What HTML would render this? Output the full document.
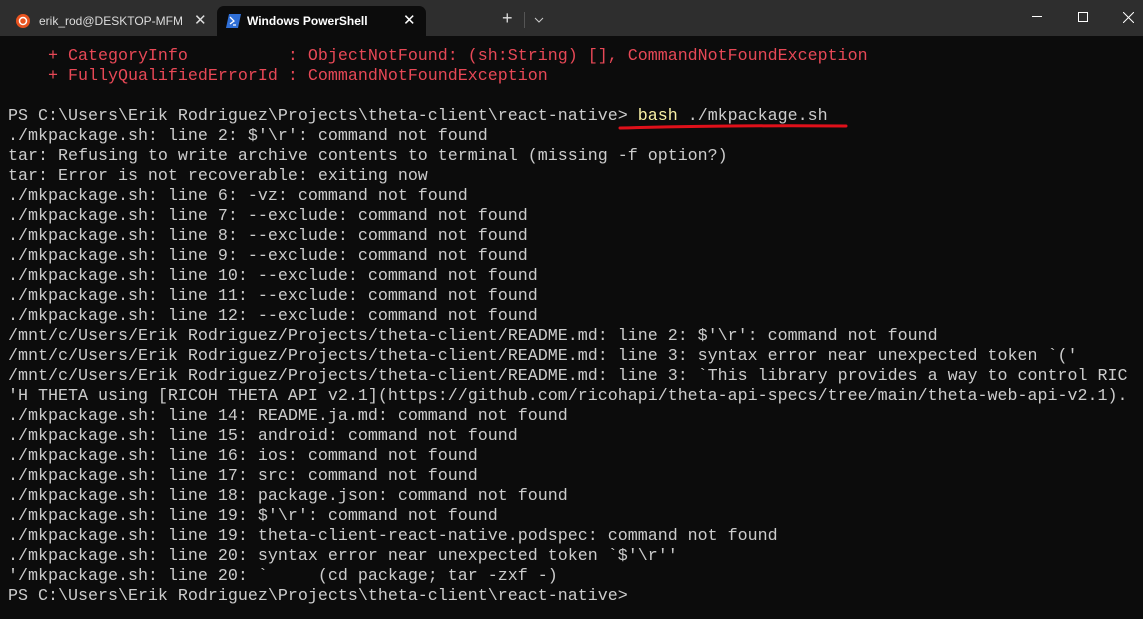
<!DOCTYPE html>
<html><head><meta charset="utf-8"><style>
html,body{margin:0;padding:0;width:1143px;height:619px;overflow:hidden;background:#0c0c0c;font-family:"Liberation Sans",sans-serif}
#bar{position:absolute;left:0;top:0;width:1143px;height:36px;background:#2e2e2e}
.tab{position:absolute;top:6px;height:30px;font-size:12px;color:#ccc;line-height:30px}
#t2{left:217px;width:209px;background:#0c0c0c;border-radius:7px 7px 0 0;color:#fff}
pre{position:absolute;left:8px;top:47px;margin:0;font-family:"Liberation Mono",monospace;font-size:16.67px;line-height:20px;color:#cccccc;white-space:pre}
.r{color:#e74856}.y{color:#f9f1a5}
</style></head><body>
<div id="bar">
 <div class="tab" style="left:0;width:215px">
  <svg style="position:absolute;left:16px;top:8px" width="14" height="14"><circle cx="7" cy="7" r="7" fill="#e95420"/><circle cx="7" cy="7" r="3.5" fill="none" stroke="#fff" stroke-width="1.5"/></svg>
  <span style="position:absolute;left:39px;width:143px;overflow:hidden;white-space:nowrap;color:#ddd">erik_rod@DESKTOP-MFMN3H:</span>
  <span style="position:absolute;left:194px;font-size:15px;color:#ddd">✕</span>
 </div>
 <div class="tab" id="t2">
  <svg style="position:absolute;left:9px;top:8px" width="15" height="14"><path d="M3 0H15L12 14H0Z" fill="#2f6fd6"/><path d="M4 3L8 7L4 10M7 11H10" stroke="#fff" stroke-width="1.3" fill="none"/></svg>
  <span style="position:absolute;left:30px;font-weight:bold">Windows PowerShell</span>
  <span style="position:absolute;left:186px;font-size:15px">✕</span>
 </div>
 <span style="position:absolute;left:502px;top:8px;color:#ddd;font-size:18px">+</span>
 <div style="position:absolute;left:524px;top:12px;width:1px;height:16px;background:#555"></div>
 <svg style="position:absolute;left:534px;top:17px" width="10" height="6"><path d="M1 1L5 5L9 1" stroke="#ccc" fill="none"/></svg>
 <div style="position:absolute;left:1032px;top:16px;width:10px;height:1px;background:#fff"></div>
 <div style="position:absolute;left:1078px;top:12px;width:8px;height:8px;border:1px solid #fff"></div>
 <svg style="position:absolute;left:1123px;top:12px" width="11" height="11"><path d="M0 0L11 11M11 0L0 11" stroke="#fff"/></svg>
</div>
<pre><span class="r">    + CategoryInfo          : ObjectNotFound: (sh:String) [], CommandNotFoundException
    + FullyQualifiedErrorId : CommandNotFoundException</span>

PS C:\Users\Erik Rodriguez\Projects\theta-client\react-native> <span class="y">bash</span> ./mkpackage.sh
./mkpackage.sh: line 2: $'\r': command not found
tar: Refusing to write archive contents to terminal (missing -f option?)
tar: Error is not recoverable: exiting now
./mkpackage.sh: line 6: -vz: command not found
./mkpackage.sh: line 7: --exclude: command not found
./mkpackage.sh: line 8: --exclude: command not found
./mkpackage.sh: line 9: --exclude: command not found
./mkpackage.sh: line 10: --exclude: command not found
./mkpackage.sh: line 11: --exclude: command not found
./mkpackage.sh: line 12: --exclude: command not found
/mnt/c/Users/Erik Rodriguez/Projects/theta-client/README.md: line 2: $'\r': command not found
/mnt/c/Users/Erik Rodriguez/Projects/theta-client/README.md: line 3: syntax error near unexpected token `('
/mnt/c/Users/Erik Rodriguez/Projects/theta-client/README.md: line 3: `This library provides a way to control RIC
'H THETA using [RICOH THETA API v2.1](https://github.com/ricohapi/theta-api-specs/tree/main/theta-web-api-v2.1).
./mkpackage.sh: line 14: README.ja.md: command not found
./mkpackage.sh: line 15: android: command not found
./mkpackage.sh: line 16: ios: command not found
./mkpackage.sh: line 17: src: command not found
./mkpackage.sh: line 18: package.json: command not found
./mkpackage.sh: line 19: $'\r': command not found
./mkpackage.sh: line 19: theta-client-react-native.podspec: command not found
./mkpackage.sh: line 20: syntax error near unexpected token `$'\r''
'/mkpackage.sh: line 20: `     (cd package; tar -zxf -)
PS C:\Users\Erik Rodriguez\Projects\theta-client\react-native></pre>
<svg style="position:absolute;left:615px;top:122px" width="236" height="10"><path d="M5 6Q120 3 231 4" stroke="#e0101a" stroke-width="3" fill="none" stroke-linecap="round"/></svg>
</body></html>
